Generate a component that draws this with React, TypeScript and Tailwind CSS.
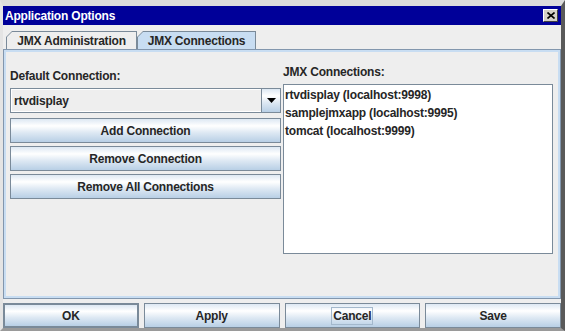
import React from "react";

const btn =
  "flex items-center justify-center border border-[#7a8a99] bg-[linear-gradient(#dde8f3,#ffffff_30%,#dde8f3_60%,#b8cfe5)] text-[#262626]";

function Tab({ label, active, className }: { label: string; active?: boolean; className: string }) {
  return (
    <div
      className={`h-[18px] bg-[#7a8a99] pt-px px-px [clip-path:polygon(6px_0,100%_0,100%_100%,0_100%,0_6px)] ${className}`}
    >
      <div
        className={`h-full flex items-center justify-center [clip-path:polygon(5px_0,100%_0,100%_100%,0_100%,0_5px)] ${
          active ? "bg-[#c8ddf2]" : "bg-[#eeeeee]"
        }`}
      >
        {label}
      </div>
    </div>
  );
}

const connections = [
  "rtvdisplay (localhost:9998)",
  "samplejmxapp (localhost:9995)",
  "tomcat (localhost:9999)",
];

export default function App() {
  return (
    <div className="w-[565px] h-[331px] flex flex-col overflow-hidden bg-[#eeeeee] border-t-[6px] border-t-[#dcdcdc] border-l-[3px] border-l-[#e4e4e4] border-r-[4px] border-r-[#5a5a5a] border-b-[3px] border-b-[#9a9a9a] font-['Liberation_Sans',Arial,sans-serif] font-bold text-[12px] tracking-[-0.2px] text-[#262626]">
      {/* title bar */}
      <div className="h-[19px] shrink-0 flex items-center justify-between bg-[#000099] pl-[2px] pr-[3px]">
        <span className="text-white leading-none">Application Options</span>
        <div className="w-[15px] h-[13px] flex items-center justify-center bg-[#d4d0c8] border border-t-white border-l-white border-r-[#404040] border-b-[#404040]">
          <svg width="8" height="7" viewBox="0 0 8 7">
            <path d="M0.5 0.5 L7.5 6.5 M7.5 0.5 L0.5 6.5" stroke="#000" strokeWidth="1.6" />
          </svg>
        </div>
      </div>

      {/* tabs */}
      <div className="h-[24px] shrink-0 flex items-end pl-[3px]">
        <Tab label="JMX Administration" className="w-[131px]" />
        <Tab label="JMX Connections" active className="w-[119px]" />
      </div>

      {/* tab content */}
      <div className="h-[250px] shrink-0 border border-[#8296ad]">
        <div className="h-full flex gap-[2px] border-2 border-[#c8ddf2] pl-[4px] pr-[5px]">
          <div className="w-[271px] flex flex-col pt-[17px]">
            <div className="h-[15px] leading-[15px]">Default Connection:</div>
            <div className="mt-[4px] h-[25px] flex border border-[#7a8a99] bg-[#eeeeee]">
              <div className="flex-1 flex items-center pl-[2px] border border-white border-r-0">rtvdisplay</div>
              <div className="w-[19px] flex items-center justify-center border-l border-[#7a8a99] bg-[linear-gradient(#dde8f3,#ffffff_30%,#dde8f3_60%,#b8cfe5)]">
                <svg width="9" height="5" viewBox="0 0 9 5">
                  <path d="M0 0 H9 L4.5 5 Z" fill="#000" />
                </svg>
              </div>
            </div>
            <div className="mt-[5px] flex flex-col gap-[3px]">
              <div className={`h-[25px] ${btn}`}>Add Connection</div>
              <div className={`h-[25px] ${btn}`}>Remove Connection</div>
              <div className={`h-[25px] ${btn}`}>Remove All Connections</div>
            </div>
          </div>

          <div className="w-[270px] flex flex-col pt-[13px]">
            <div className="h-[15px] leading-[15px]">JMX Connections:</div>
            <div className="mt-[4px] h-[170px] border border-[#7a8a99] bg-white pt-[1px] pl-[1px]">
              {connections.map((c) => (
                <div key={c} className="h-[18px] leading-[18px]">
                  {c}
                </div>
              ))}
            </div>
          </div>
        </div>
      </div>

      {/* dialog buttons */}
      <div className="mt-[4px] h-[25px] shrink-0 grid grid-cols-4 gap-[5px]">
        <div className={`${btn} border-2`}>OK</div>
        <div className={btn}>Apply</div>
        <div className={btn}>
          <span className="border border-[#a3b8cc] px-px leading-[16px]">Cancel</span>
        </div>
        <div className={btn}>Save</div>
      </div>
    </div>
  );
}
